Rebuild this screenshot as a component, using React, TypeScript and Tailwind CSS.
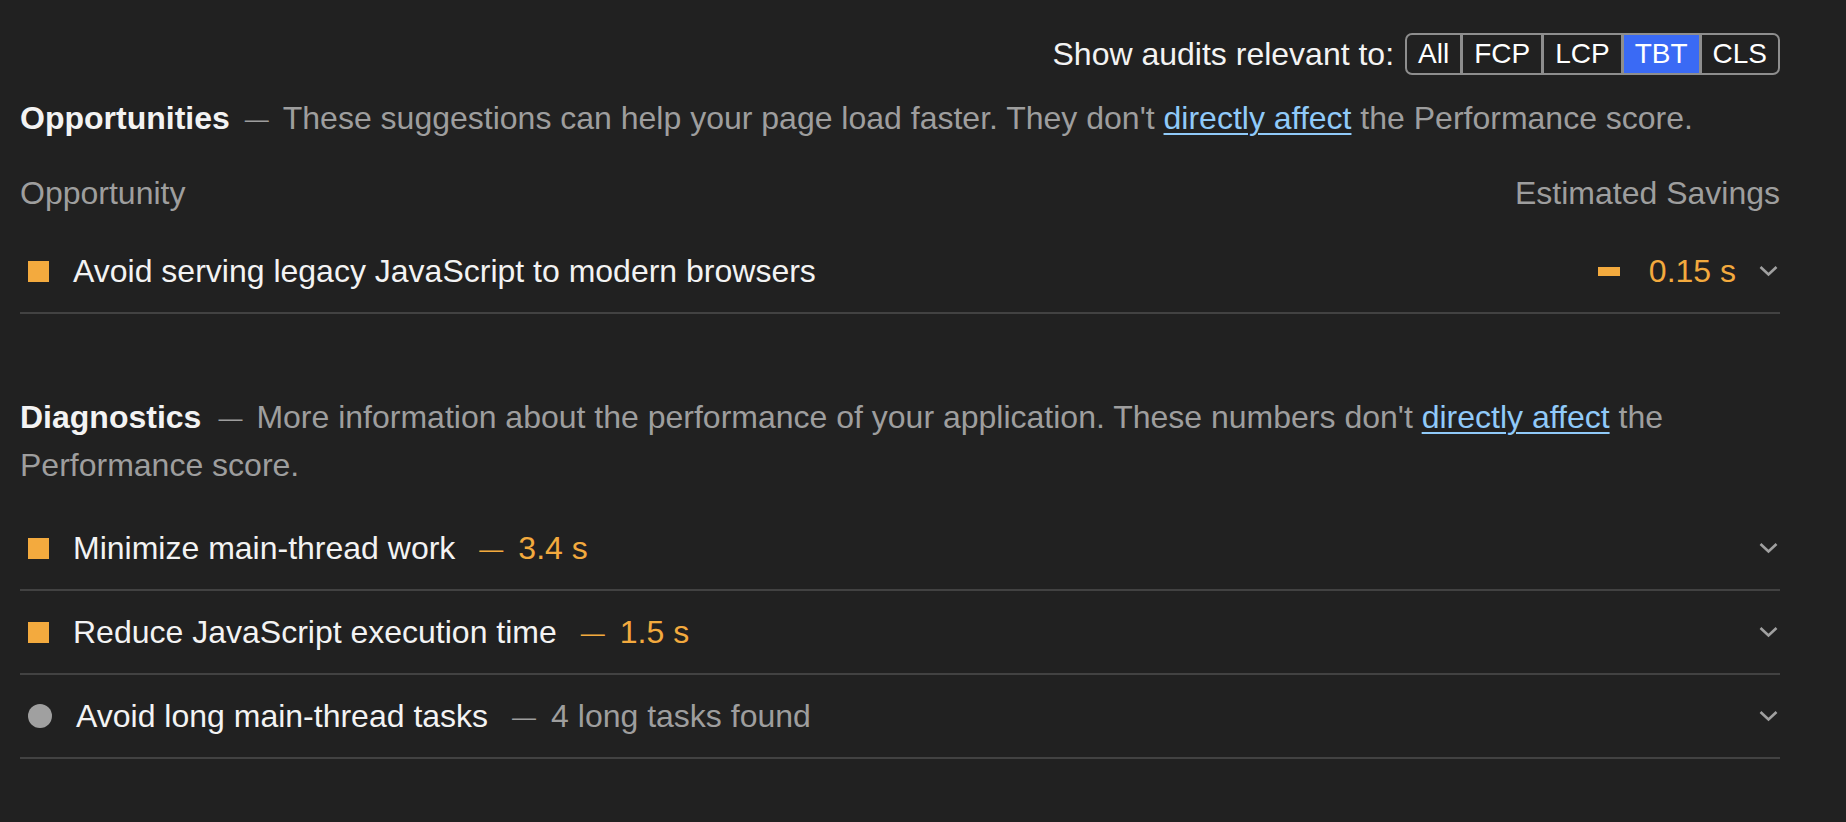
import { ReactNode } from "react";

type Rating = "average" | "info";

interface Audit {
  title: string;
  rating: Rating;
  display?: string;
}

const diagnostics: Audit[] = [
  { title: "Minimize main-thread work", rating: "average", display: "3.4 s" },
  { title: "Reduce JavaScript execution time", rating: "average", display: "1.5 s" },
  { title: "Avoid long main-thread tasks", rating: "info", display: "4 long tasks found" },
];

const filters = ["All", "FCP", "LCP", "TBT", "CLS"];

function Chevron() {
  return (
    <svg width="19" height="12" viewBox="0 0 19 12" className="shrink-0">
      <path d="M1.5 2 L9.5 9.5 L17.5 2" fill="none" stroke="#a0a0a0" strokeWidth="2.6" />
    </svg>
  );
}

function ScoreIcon({ rating }: { rating: Rating }) {
  if (rating === "info") {
    return <span className="ml-[8px] mr-[24px] h-[24px] w-[24px] shrink-0 rounded-full bg-[#a0a0a0]" />;
  }
  return <span className="ml-[8px] mr-[24px] h-[21px] w-[21px] shrink-0 bg-[#f3aa3e]" />;
}

function Dash({ before, after }: { before: string; after: string }) {
  // narrower dash than Liberation's full-em one
  return <span className={`text-[24px] leading-none align-[2px] ${before} ${after}`}>—</span>;
}

function Link({ children }: { children: ReactNode }) {
  return <a className="text-[#90caf9] underline underline-offset-[4px] decoration-[2px]">{children}</a>;
}

function GroupHeader({ title, gap, children }: { title: string; gap: string; children: ReactNode }) {
  return (
    <p className="text-[#9e9e9e]">
      <span className="font-bold text-[#f3f3f3]">{title}</span>
      <Dash before={gap} after="mr-[14px]" />
      {children}
    </p>
  );
}

export default function App() {
  return (
    <div
      className="min-h-screen bg-[#212121] pl-[20px] pr-[66px] pt-[33px] text-[32px] leading-[48px] text-[#f3f3f3]"
      style={{ fontFamily: '"Liberation Sans", Arial, sans-serif' }}
    >
      <div className="flex h-[42px] items-center justify-end">
        <span className="mr-[11px]">Show audits relevant to:</span>
        <div className="flex gap-[3px] rounded-[7px] border-2 border-[#8e8e8e] bg-[#8e8e8e]">
          {filters.map((f, i) => (
            <span
              key={f}
              className={
                "flex h-[38px] items-center px-[11px] text-[28px] leading-none text-white " +
                (f === "TBT" ? "bg-[#3a6af5] " : "bg-[#212121] ") +
                (i === 0 ? "rounded-l-[5px] " : "") +
                (i === filters.length - 1 ? "rounded-r-[5px]" : "")
              }
            >
              {f}
            </span>
          ))}
        </div>
      </div>

      <div className="mt-[19px]">
        <GroupHeader title="Opportunities" gap="ml-[15px]">
          These suggestions can help your page load faster. They don't <Link>directly affect</Link> the Performance score.
        </GroupHeader>
      </div>

      <div className="mt-[27px] flex justify-between text-[#9e9e9e]">
        <span>Opportunity</span>
        <span>Estimated Savings</span>
      </div>

      <div className="mt-[13px] flex h-[84px] items-center border-b-2 border-[#424242]">
        <ScoreIcon rating="average" />
        <span className="flex-1">Avoid serving legacy JavaScript to modern browsers</span>
        <span className="h-[9px] w-[22px] bg-[#f3aa3e]" />
        <span className="ml-[29px] mr-[23px] text-[#f3aa3e]">0.15 s</span>
        <span className="mr-[2px]">
          <Chevron />
        </span>
      </div>

      <div className="mt-[79px]">
        <GroupHeader title="Diagnostics" gap="ml-[17px]">
          More information about the performance of your application. These numbers don't <Link>directly affect</Link> the
          Performance score.
        </GroupHeader>
      </div>

      <div className="mt-[18px]">
        {diagnostics.map((a) => (
          <div key={a.title} className="flex h-[84px] items-center border-b-2 border-[#424242]">
            <ScoreIcon rating={a.rating} />
            <span className="flex-1">
              {a.title}
              <span className={a.rating === "average" ? "text-[#f3aa3e]" : "text-[#9e9e9e]"}>
                <Dash before="ml-[24px]" after="mr-[15px]" />
                {a.display}
              </span>
            </span>
            <span className="mr-[2px]">
              <Chevron />
            </span>
          </div>
        ))}
      </div>
    </div>
  );
}
